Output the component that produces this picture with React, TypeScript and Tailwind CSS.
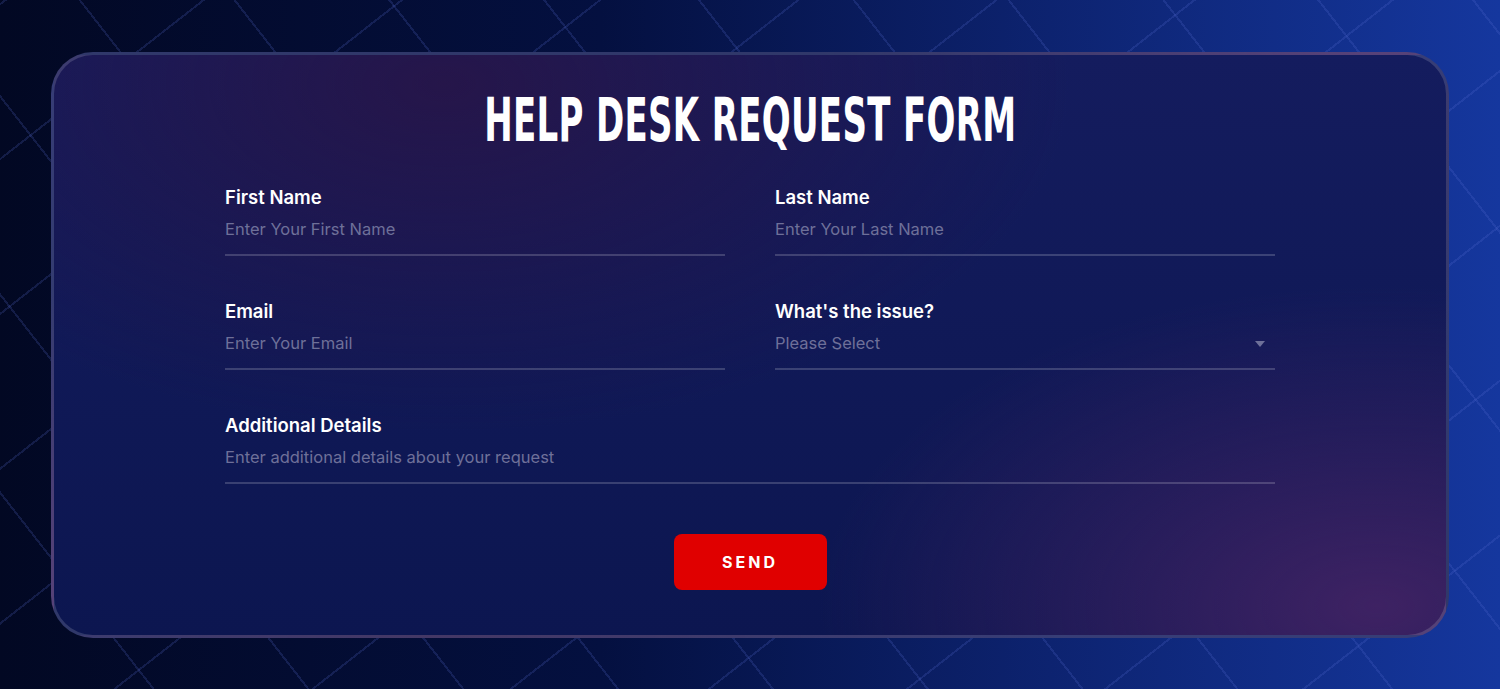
const labelFont = { fontFamily: "Inter, 'Noto Sans', sans-serif" };

function Field({ label, placeholder, select = false }: { label: string; placeholder: string; select?: boolean }) {
  return (
    <div className="flex flex-col">
      <label className="text-[18.5px] font-semibold leading-[22px] text-white">{label}</label>
      <div className="mt-[5px] flex h-[43px] items-center justify-between border-b-2 border-[#ffffff2e] pb-[7px]">
        {select ? (
          <>
            <span className="text-[16.5px] text-[#6e7099]">{placeholder}</span>
            <svg width="10" height="6" viewBox="0 0 10 6" className="mr-[10px]">
              <path d="M0 0h10L5 6z" fill="#6e7099" />
            </svg>
          </>
        ) : (
          <input
            placeholder={placeholder}
            className="w-full bg-transparent text-[16.5px] text-white outline-none placeholder:text-[#6e7099]"
          />
        )}
      </div>
    </div>
  );
}

export default function App() {
  return (
    <div
      style={labelFont}
      className="relative h-[689px] w-[1500px] overflow-hidden bg-[linear-gradient(90deg,#020823_0%,#041040_40%,#0d2370_70%,#15379e_100%)]"
    >
      <div className="absolute inset-0 bg-[repeating-linear-gradient(52deg,transparent_0px,transparent_120px,#5a6fd633_120px,#5a6fd633_122px),repeating-linear-gradient(-38deg,transparent_0px,transparent_120px,#5a6fd633_120px,#5a6fd633_122px)]" />
      <div className="relative flex h-full items-center justify-center">
        <div className="h-[586px] w-[1398px] overflow-hidden rounded-[42px] border-[3px] border-[#ffffff26] bg-[radial-gradient(ellipse_45%_60%_at_28%_5%,#2a1445cc,transparent),radial-gradient(ellipse_40%_55%_at_95%_95%,#3e2263,transparent),linear-gradient(180deg,#141c5e_0%,#0c1650_100%)]">
          <div className="flex flex-col items-center pt-[30px]">
            <h1
              style={{ fontFamily: "'Liberation Sans Narrow', 'DejaVu Sans Condensed', 'Liberation Sans', sans-serif" }}
              className="scale-x-[0.63] text-[60px] font-bold leading-[70px] tracking-[0.5px] text-white"
            >
              HELP DESK REQUEST FORM
            </h1>
            <div className="mt-[31px] grid w-[1050px] grid-cols-2 gap-x-[50px] gap-y-[44px]">
              <Field label="First Name" placeholder="Enter Your First Name" />
              <Field label="Last Name" placeholder="Enter Your Last Name" />
              <Field label="Email" placeholder="Enter Your Email" />
              <Field label="What's the issue?" placeholder="Please Select" select />
              <div className="col-span-2">
                <Field label="Additional Details" placeholder="Enter additional details about your request" />
              </div>
            </div>
            <button className="mt-[50px] h-[56px] w-[153px] rounded-[8px] bg-[#e00000] text-[16px] font-bold tracking-[3px] text-white">
              SEND
            </button>
          </div>
        </div>
      </div>
    </div>
  );
}
